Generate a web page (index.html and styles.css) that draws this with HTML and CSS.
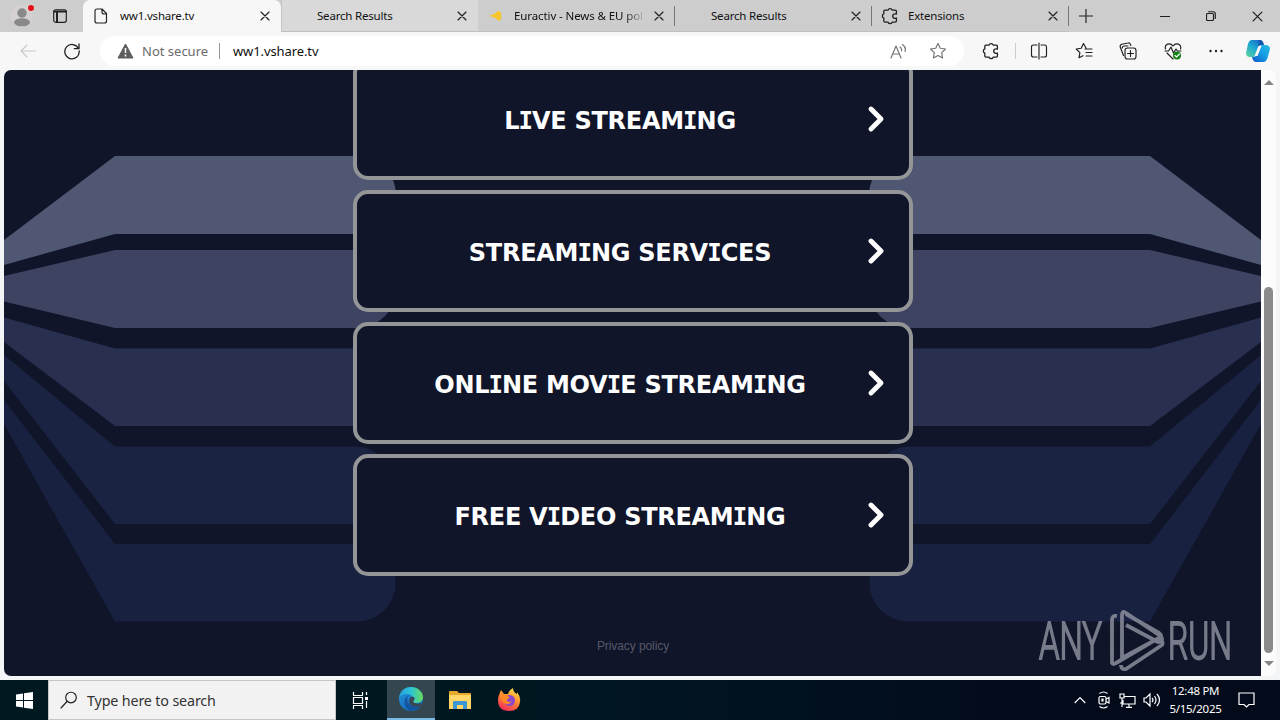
FILE: index.html
```html
<!DOCTYPE html>
<html lang="en">
<head>
<meta charset="utf-8">
<title>ww1.vshare.tv</title>
<link rel="stylesheet" href="styles.css">
</head>
<body>
<svg class="defs" width="0" height="0" aria-hidden="true">
  <symbol id="close" viewBox="0 0 10 10"><path d="M1 1l8 8M9 1l-8 8"/></symbol>
  <symbol id="puzzle" viewBox="0 0 16 16"><path d="M3.500 2.700h2.800a1.900 1.900 0 0 1 3.600 0h2.800q1 0 1 1v2.600q-.6-.3-1.300-.2a2 2 0 0 0 0 4q.7 0 1.300-.3v2.700q0 1-1 1H9.900a1.900 1.900 0 0 1-3.600 0H3.500q-1 0-1-1V9.800a1.900 1.900 0 0 1 0-3.600V3.700q0-1 1-1z"/></symbol>
  <symbol id="chevron" viewBox="0 0 20 28"><path d="M4 4l10 10L4 24"/></symbol>
</svg>
<div class="screen">
  <header class="tabs">
    <div class="corner">
      <svg class="profile" width="26" height="28" viewBox="0 0 26 28"><circle cx="12" cy="14" r="11" fill="#d5d1d0"/><circle cx="12" cy="11" r="4.700" fill="#898989"/><ellipse cx="12" cy="20.300" rx="8" ry="4" fill="#898989"/><circle cx="21" cy="6" r="4" fill="#dcd4d3"/><circle cx="21" cy="6" r="3" fill="#df1019"/></svg>
      <svg class="line workspace" width="14" height="14" viewBox="0 0 14 14"><rect x=".7" y=".7" width="12.600" height="12.600" rx="2"/><path d="M1 2.500h12M4 3v10" stroke-width="2"/></svg>
    </div>
    <div class="tab active">
      <svg class="line fav" width="16" height="18" viewBox="0 0 16 18"><path d="M4 2h5l4.500 4.500V14q0 2-2 2H4q-2 0-2-2V4q0-2 2-2zM9 2v3q0 2 2 2h2.500"/></svg>
      <span class="title host">ww1.vshare.tv</span><svg class="line x"><use href="#close"/></svg>
    </div>
    <div class="tab pale">
      <span class="title">Search Results</span><svg class="line x"><use href="#close"/></svg>
    </div>
    <div class="tab euractiv">
      <svg class="fav" width="16" height="18" viewBox="0 0 16 18"><path d="M1 9q5-1 9-5 4 0 3 5 1 4-2 5-4-4-10-5z" fill="#f5c62d"/></svg>
      <span class="title fade">Euractiv - News &amp; EU pol</span><svg class="line x"><use href="#close"/></svg>
    </div>
    <div class="tab ruled">
      <span class="title">Search Results</span><svg class="line x"><use href="#close"/></svg>
    </div>
    <div class="tab ruled">
      <svg class="line fav small" width="18" height="18"><use href="#puzzle"/></svg>
      <span class="title">Extensions</span><svg class="line x"><use href="#close"/></svg>
    </div>
    <div class="windowbar">
      <svg class="line" width="14" height="14" viewBox="0 0 14 14"><path d="M7 0v14M0 7h14"/></svg>
      <svg class="line minimise" width="10" height="10" viewBox="0 0 10 10"><path d="M0 5.500h10"/></svg>
      <svg class="line" width="10" height="10" viewBox="0 0 10 10"><rect x=".5" y="2.500" width="7" height="7" rx="1.200"/><path d="M2.500.7H7q2.300 0 2.300 2.300v4.500"/></svg>
      <svg class="line" width="11" height="11"><use href="#close"/></svg>
    </div>
  </header>

  <nav class="toolbar">
    <svg class="line back" width="16" height="14" viewBox="0 0 16 14"><path d="M15.500 7H1M7 1L1 7l6 6"/></svg>
    <svg class="line reload" width="18" height="18" viewBox="0 0 18 18"><path d="M15.500 6.500A7.200 7.200 0 1 0 16.200 9M16 2v4.700h-4.700"/></svg>
    <div class="address">
      <svg width="17" height="16" viewBox="0 0 17 16"><path d="M8.500 1L16 15H1z" fill="#5d5d5d" stroke="#5d5d5d" stroke-linejoin="round"/><path d="M8.500 5v5M8.500 11.500v2" stroke="#fff" stroke-width="1.500"/></svg>
      <span class="secure">Not secure</span><span class="url">ww1.vshare.tv</span>
      <svg class="line soft read" width="17" height="16" viewBox="0 0 17 16"><path d="M1 15L6 3l5 12M3 11h6M10 4q2 1.500 1.500 4M12.500 1.500q4 3 2.500 7"/></svg>
      <svg class="line soft" width="18" height="18" viewBox="0 0 18 18"><path d="M9 1.500l2.300 4.800 5.200.7-3.800 3.700.9 5.300L9 13.500 4.400 16l.9-5.300L1.500 7l5.200-.7z"/></svg>
    </div>
    <div class="tools">
      <svg class="line" width="18" height="18"><use href="#puzzle"/></svg>
      <i class="rule"></i>
      <svg class="line" width="18" height="18" viewBox="0 0 18 18"><path d="M7 3H3.500q-2 0-2 2v8q0 2 2 2H7M11 3h3.500q2 0 2 2v8q0 2-2 2H11M9 1v16"/></svg>
      <svg class="line" width="18" height="18" viewBox="0 0 18 18"><path d="M11 6L8.500 1.500 6.200 6.300l-5 .7 3.700 3.600-.9 5.200L8 13.700M10 7h7M11 10.500h6M11 14h6"/></svg>
      <svg class="line" width="18" height="18" viewBox="0 0 18 18"><rect x="6" y="6" width="11" height="11" rx="2.500"/><path d="M11.500 8.500v6M8.500 11.500h6M4.500 13.500L1.200 5Q.8 3 2.800 2.300L9 1q2-.5 2.500 1.500l.3 1M3.300 6q0-2 2-2H9"/></svg>
      <svg class="line" width="18" height="18" viewBox="0 0 18 18"><path d="M1.500 7C0 2 6 0 9 4c3-4 9-2 7.500 3M1 9h3.500L7 5l2.500 6L12 7l1.500 2H17M3 11l6 6"/><circle cx="13" cy="13.500" r="4" fill="#148016" stroke="none"/><path d="M11 13.500l1.500 1.500 3-3" stroke="#fff"/></svg>
      <svg width="16" height="18" viewBox="0 0 16 18"><g fill="#222"><circle cx="2.500" cy="9" r="1.200"/><circle cx="8" cy="9" r="1.200"/><circle cx="13.500" cy="9" r="1.200"/></g></svg>
    </div>
    <svg class="copilot" width="26" height="24" viewBox="0 0 26 24">
      <defs><linearGradient id="cp1" x1="0" y1="1" x2=".8" y2="0"><stop stop-color="#64d3a0"/><stop offset=".55" stop-color="#1ba9d0"/><stop offset="1" stop-color="#1a67c8"/></linearGradient><linearGradient id="cp2" x1="0" y1="1" x2="1" y2="0"><stop stop-color="#1057c8"/><stop offset=".55" stop-color="#159ee5"/><stop offset="1" stop-color="#27bcdf"/></linearGradient></defs>
      <path d="M7 1h8q3 0 3.500 4H16q-2 0-3 4l-2 7q-1 2-3 2H5q-4 0-4-4l2-9q1-4 4-4z" fill="url(#cp1)"/><path d="M20 6q5 0 5 4l-2.500 9q-1.500 4-4 4H11q-3 0-4-5h2q2 0 3-3l2-6q1-3 3-3z" fill="url(#cp2)"/><path d="M14 1q4 0 5 5h-3q-2 0-3 3z" fill="#1557ad"/><path d="M13.500 7h3l-4 10h-3z" fill="#f7f7f7"/>
    </svg>
  </nav>

  <div class="frame">
    <main class="page">
      <svg class="backdrop" viewBox="4 70 1257 606">
        <defs><g id="wing">
          <path fill="#505773" d="M4 240L115 156H357a39 39 0 0 1 0 78H115L4 265z"/>
          <path fill="#3d4361" d="M4 276L115 250H357a39 39 0 0 1 0 78H115L4 301.500z"/>
          <path fill="#282f4f" d="M4 317.500L115 348.500H357a38.800 38.800 0 0 1 0 77.500H115L4 342z"/>
          <path fill="#1b2342" d="M4 355L115 446.500H357a38.800 38.800 0 0 1 0 77.500H115L4 381z"/>
          <path fill="#192141" d="M4 400L115 544H357a38.700 38.700 0 0 1 0 77.400H115L4 424z"/>
        </g></defs>
        <use href="#wing"/><use href="#wing" transform="matrix(-1 0 0 1 1265 0)"/>
      </svg>
      <div class="links">
        <a class="card first"><span>L<b>I</b>VE STREAM<b>I</b>NG</span><svg><use href="#chevron"/></svg></a>
        <a class="card"><span>STREAM<b>I</b>NG SERV<b>I</b>CES</span><svg><use href="#chevron"/></svg></a>
        <a class="card"><span>ONL<b>I</b>NE MOV<b>I</b>E STREAM<b>I</b>NG</span><svg><use href="#chevron"/></svg></a>
        <a class="card"><span>FREE V<b>I</b>DEO STREAM<b>I</b>NG</span><svg><use href="#chevron"/></svg></a>
        <a class="privacy">Privacy policy</a>
      </div>
      <svg class="watermark" width="220" height="66" viewBox="1037 607 220 66">
        <g class="brand"><text x="1039" y="659" textLength="63" lengthAdjust="spacingAndGlyphs">ANY</text><text x="1168" y="659" textLength="64" lengthAdjust="spacingAndGlyphs">RUN</text></g>
        <path d="M1117 616q-5-1-5 4v43q1 2 4 0l34-20M1126 625l32 17q4 0 4-3 0-2-3-4l-33-22q-4-3-4 2v43l37-20q4-2 0-5l-33-19M1121 665q0 5 5 4l36-24q2-3-2-5"/>
      </svg>
    </main>
    <div class="scrollbar"><i class="arrow up"></i><i class="thumb"></i><i class="arrow down"></i></div>
  </div>

  <footer class="taskbar">
    <div class="start"><svg width="17" height="17" viewBox="0 0 17 17"><path fill="#fff" d="M0 2.500l7-1V8H0zM8 1.300L17 0v8H8zM0 9h7v6.500l-7-1zM8 9h9v8l-9-1.300z"/></svg></div>
    <div class="search"><svg class="line" width="18" height="18" viewBox="0 0 18 18"><circle cx="11" cy="6.500" r="5.300"/><path d="M7 10.500L1 17"/></svg><span>Type here to search</span></div>
    <div class="app"><svg class="white" width="17" height="17" viewBox="0 0 17 17"><path d="M1.500 0v3M10.500 0v3M1 3.500h10M1.500 5.500h9v6h-9zM1 13.500h10M1.500 14v3M10.500 14v3M14.500 0v3M14.500 9v7"/><path d="M13 5h3v3h-3z" fill="#fff" stroke="none"/></svg></div>
    <div class="app current"><svg width="26" height="26" viewBox="0 0 26 26">
      <defs><linearGradient id="edge1" x1="0" y1=".5" x2="1" y2=".5"><stop stop-color="#249fd9"/><stop offset=".5" stop-color="#2bc4d5"/><stop offset="1" stop-color="#67dc5b"/></linearGradient><linearGradient id="edge2" x1="0" y1="0" x2=".7" y2="1"><stop stop-color="#2593d9"/><stop offset="1" stop-color="#1269bd"/></linearGradient></defs>
      <circle cx="13" cy="13" r="12" fill="url(#edge2)"/><path d="M1 12C2 4 8 1 13 1c7 0 12 5 12 10 0 4-3 6-7 6q-4 0-3-2c2-4-2-7-6-7-4 0-7 2-8 4z" fill="url(#edge1)"/><path d="M10 10c-3 7 3 12 13 9-3 5-8 6-11 6-6-3-8-12-2-15z" fill="#14559f"/><path d="M15.500 11c3 2-1 4 0 5 1 2 5 2 8 1v3c-8 2-14-1-12-7q1-3 4-2z" fill="#3a4652"/></svg></div>
    <div class="app"><svg width="22" height="20" viewBox="0 0 22 20"><path d="M0 2q0-1 1-1h7l2 2h11q1 0 1 1v14H0z" fill="#e7a92d"/><path d="M0 5h22v14H0z" fill="#ffd667"/><path d="M4 19v-7q0-1 1-1h12q1 0 1 1v7h-4v-4H8v4z" fill="#3c96d2"/></svg></div>
    <div class="app"><svg width="24" height="24" viewBox="0 0 24 24">
      <defs><linearGradient id="fox" x1=".8" y1="0" x2=".3" y2="1"><stop stop-color="#ffe64b"/><stop offset=".45" stop-color="#ff902e"/><stop offset="1" stop-color="#f12b59"/></linearGradient></defs>
      <path d="M2 7l2-5 3 4 4 0q1-4 5-6 0 4 4 6l0-2q4 5 3 10-1 9-11 9Q1 23 1 12q0-3 1-5z" fill="url(#fox)"/><circle cx="12.500" cy="12.500" r="5.500" fill="#8a48d0"/><path d="M3 8q4-3 8 0l2 2q-4 1-3 3 2 2 5 0-2 4-6 3-5-2-6-8z" fill="#ff8a25"/></svg></div>
    <div class="tray">
      <svg class="white" width="12" height="8" viewBox="0 0 12 8"><path d="M.7 7L6 1.500 11.300 7"/></svg>
      <svg class="white" width="14" height="18" viewBox="0 0 14 18"><rect x="2" y="5.500" width="7" height="7.500" rx="1.500"/><path d="M9 8l3-1.500v5.500L9 10.500M2.500 2.500q4-3 8 0M2.500 15.500q4 3 8 0M5 8h1v2H5z"/></svg>
      <svg class="white" width="17" height="15" viewBox="0 0 17 15"><path d="M5 3.500h11v7.500H4V7M10 11v3M7 14.300h6M1 1h4v4H1zM3 5v9M3 10H1"/></svg>
      <svg class="white" width="18" height="16" viewBox="0 0 18 16"><path d="M1 6h2l4-4v12l-4-4H1zM9 6q2 2 0 4M11.500 4q3 4 0 8M14 2q5 6 0 12"/></svg>
      <div class="clock"><span>12:48 PM</span><span>5/15/2025</span></div>
      <svg class="white" width="17" height="17" viewBox="0 0 17 17"><path d="M1 1h15v11.500h-5L8.500 15 6 12.500H1z"/></svg>
    </div>
  </footer>
</div>
</body>
</html>
```
FILE: styles.css
```css
* { box-sizing: border-box; }
body { margin: 0; overflow: hidden; font-family: "Noto Sans", "Open Sans", sans-serif; }
.defs { position: absolute; }
svg { flex: none; display: block; }
.screen { width: 1280px; height: 720px; display: flex; flex-direction: column; background: #f4f5f7; }
.line { fill: none; stroke: #202020; stroke-width: 1.15; stroke-linecap: round; stroke-linejoin: round; }
.soft { stroke: #727272; }

.tabs { height: 32px; flex: none; display: flex; background: #cdcdcd; color: #111; font-size: 11.5px; }
.corner { width: 83px; display: flex; padding: 2px 0 0 10px; border-radius: 0 0 6px 0; }
.workspace { margin: 7px 0 0 17px; }
.tab { width: 197px; height: 32px; display: flex; align-items: center; padding: 0 11px 0 10px; border-bottom: 1px solid #bfbfbf; }
.active { width: 198px; background: #f7f7f7; border-radius: 7px 7px 0 0; border: 0; padding-bottom: 1px; }
.pale { background: #d9d9d9; border-left: 1px solid #c4c4c4; padding-left: 9px; }
.ruled { position: relative; }
.ruled::before, .windowbar::before { content: ""; position: absolute; left: -1px; top: 6px; height: 20px; width: 1px; background: #777; }
.fav { margin-right: 10px; }
.small { margin: 0 9px 0 -1px; }
.title { flex: 1; white-space: nowrap; overflow: hidden; letter-spacing: -.2px; }
.host { margin-left: 1px; }
.title:first-child { padding-left: 26px; }
.fade { margin-right: 8px; letter-spacing: -.1px; -webkit-mask-image: linear-gradient(90deg, #000 84%, transparent); mask-image: linear-gradient(90deg, #000 84%, transparent); }
.x { width: 10px; height: 10px; }
.windowbar { position: relative; flex: 1; display: flex; align-items: center; padding-left: 10px; }
.minimise { margin: 0 36px 0 67px; }
.windowbar svg:last-child { margin-left: 36px; }

.toolbar { height: 38px; flex: none; display: flex; align-items: center; background: #f7f7f7; padding-left: 20px; }
.back { stroke: #c9c9c9; }
.reload { margin-left: 27px; stroke-width: 1.3; }
.address { width: 864px; height: 30px; margin-left: 19px; display: flex; align-items: center; border-radius: 15px; background: #fff; padding: 0 17px 0 17px; font-size: 13px; }
.secure { width: 78px; margin-left: 8px; color: #6b6b6b; border-right: 1px solid #999; line-height: 16px; white-space: nowrap; }
.url { margin-left: 13px; flex: 1; letter-spacing: -.1px; color: #111; }
.read { margin-right: 22px; }
.tools { display: flex; align-items: center; margin-left: 18px; width: 242px; justify-content: space-between; }
.rule { width: 1px; height: 16px; background: #ccc; margin: 0 -12px; }
.copilot { margin-left: 21px; }

.frame { height: 606px; flex: none; display: flex; margin-left: 4px; width: 1272px; }
.page { position: relative; width: 1257px; height: 606px; overflow: hidden; background: #10152a; border-radius: 7px 0 0 7px; }
.backdrop { position: absolute; inset: 0; width: 1257px; height: 606px; }
.links { position: relative; width: 560px; margin-left: 349px; margin-top: -12px; display: flex; flex-direction: column; gap: 10px; }
.card { height: 122px; display: flex; align-items: center; justify-content: space-between; padding: 0 22px 0 0; border: 4px solid #949597; border-radius: 15px; background: #10152a; color: #fff; font: 700 24px/30px "DejaVu Sans", Verdana, sans-serif; letter-spacing: -.28px; }
.card span { width: 526px; text-align: center; margin-right: -20px; padding-top: 4px; white-space: nowrap; }
.card b { font-family: "DejaVu Sans Mono", monospace; margin: 0 -.7px; }
.card svg { width: 20px; height: 28px; fill: none; stroke: #fff; stroke-width: 4.9; stroke-linecap: round; stroke-linejoin: round; }
.privacy { align-self: center; margin-top: 53px; color: #555968; font: 12px "Liberation Sans", sans-serif; letter-spacing: -.08px; }
.watermark { position: absolute; left: 1033px; top: 537px; opacity: .72; overflow: visible; }
.watermark path { fill: none; stroke: #a0a3ae; stroke-width: 3.8; stroke-linejoin: round; }
.brand { fill: #a0a3ae; font: 300 52px Roboto, sans-serif; stroke: #a0a3ae; stroke-width: 2px; }
.scrollbar { width: 15px; background: #fcfcfc; border-radius: 0 7px 7px 0; display: flex; flex-direction: column; align-items: center; }
.arrow { border: 5px solid transparent; }
.up { border-top: 0; border-bottom: 5px solid #858585; margin-top: 10px; }
.thumb { width: 9px; height: 366px; margin-top: 202px; border-radius: 5px; background: #8b8b8b; }
.down { border-bottom: 0; border-top: 5px solid #858585; margin-top: 8px; }

.taskbar { height: 40px; flex: none; margin-top: 4px; display: flex; background: linear-gradient(90deg, #001820, #001721 45%, #030b1b 80%, #030a19); }
.start, .app { width: 48px; display: flex; align-items: center; justify-content: center; }
.app { width: 49px; }
.search { width: 288px; display: flex; align-items: center; padding-left: 11px; gap: 9px; background: #f2f2f2; border: 1px solid #c5c7c7; color: #333; font-size: 14.3px; }
.search span { letter-spacing: -.15px; }
.start + .search + .app { width: 51px; padding-right: 3px; }
.current { width: 48px; background: #34464f; border-bottom: 2px solid #78b9e5; }
.white { fill: none; stroke: #fff; stroke-width: 1.2; }
.tray { margin-left: auto; display: flex; align-items: center; gap: 8px; padding-right: 25px; }
.tray > svg:first-child { margin-right: 3px; }
.tray > svg:nth-child(3) { margin-right: -1px; }
.clock { width: 53px; display: flex; flex-direction: column; align-items: center; white-space: nowrap; color: #fff; font-size: 11.5px; line-height: 18px; letter-spacing: -.3px; margin: 0 8px 0 0; }
```
